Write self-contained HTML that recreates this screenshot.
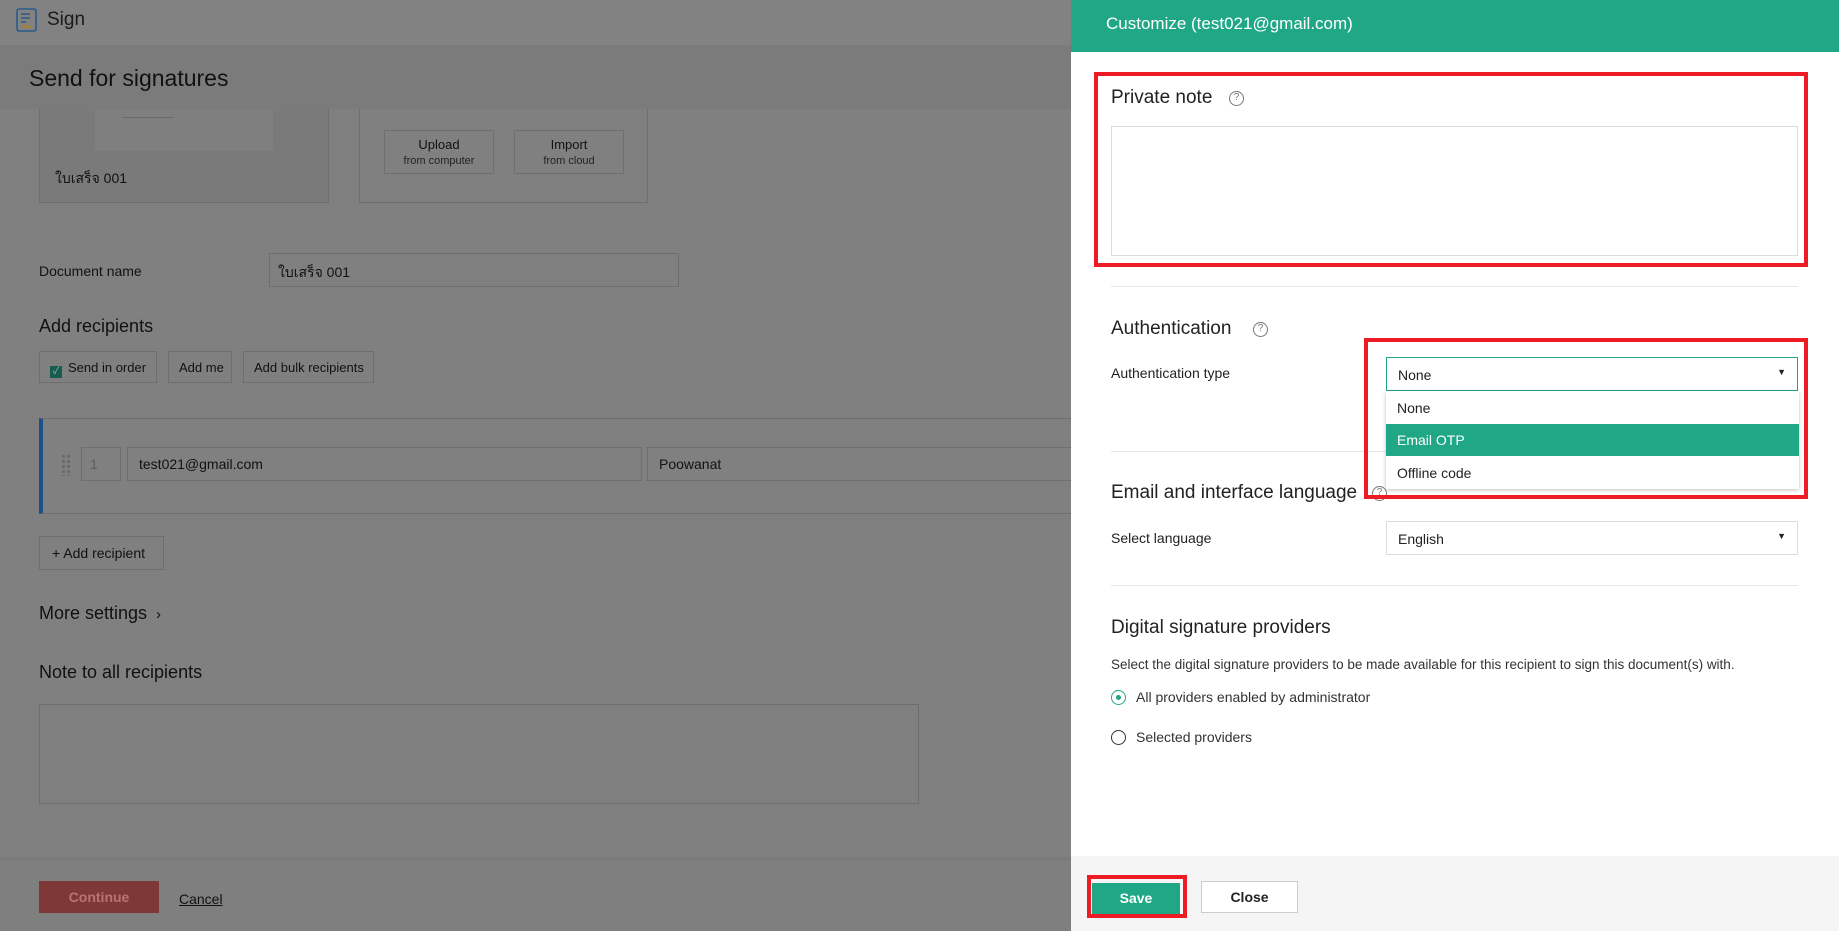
<!DOCTYPE html>
<html><head><meta charset="utf-8">
<style>
*{box-sizing:border-box;margin:0;padding:0}
body{width:1839px;height:931px;position:relative;overflow:hidden;background:#808080;font-family:"Liberation Sans","Noto Sans CJK SC",sans-serif;color:#111}
.a{position:absolute}
.bx{position:absolute;border:1px solid #6e6e6e}
.t{position:absolute;white-space:nowrap}
.pt{position:absolute;white-space:nowrap;color:#222}
.q{position:absolute;width:15px;height:15px;border:1.3px solid #777;border-radius:50%;font-size:10px;line-height:12px;text-align:center;color:#777}
.hr{position:absolute;left:1111px;width:687px;height:1px;background:#e6e6e6}
.red{position:absolute;border:4px solid #ed1c24}
</style></head><body>
<div class="a" style="left:0;top:0;width:1071px;height:45px;background:#828282"></div>
<svg class="a" style="left:16px;top:8px" width="22" height="24" viewBox="0 0 22 24"><rect x="1" y="1" width="19" height="22" rx="2" fill="none" stroke="#2a5a8a" stroke-width="1.6"/><path d="M5 6h9M5 10h9M5 14h5" stroke="#2a5a8a" stroke-width="1.6"/><path d="M6 19c3-3 4-1 5 0s3-1 5 0" stroke="#b08018" stroke-width="1.5" fill="none"/></svg>
<div class="t" style="left:47px;top:9px;font-size:19px;color:#1a1a1a">Sign</div>
<div class="a" style="left:0;top:45px;width:1071px;height:64px;background:#7b7b7b"></div>
<div class="t" style="left:29px;top:65px;font-size:23px;color:#111">Send for signatures</div>

<div class="bx" style="left:39px;top:109px;width:290px;height:94px;border-top:none;background:#7a7a7a"></div>
<div class="a" style="left:95px;top:109px;width:178px;height:42px;background:#7f7f7f"></div>
<div class="a" style="left:122px;top:117px;width:52px;height:1px;background:#6a6a6a"></div>
<div class="t" style="left:55px;top:168px;font-size:14px">ใบเสร็จ 001</div>
<div class="bx" style="left:359px;top:109px;width:289px;height:94px;border-top:none"></div>
<div class="bx" style="left:384px;top:130px;width:110px;height:44px;text-align:center;font-size:13px;padding-top:6px">Upload<div style="font-size:11px;color:#222;margin-top:3px">from computer</div></div>
<div class="bx" style="left:514px;top:130px;width:110px;height:44px;text-align:center;font-size:13px;padding-top:6px">Import<div style="font-size:11px;color:#222;margin-top:3px">from cloud</div></div>

<div class="t" style="left:39px;top:263px;font-size:14px">Document name</div>
<div class="bx" style="left:269px;top:253px;width:410px;height:34px;font-size:14px;padding:8px 0 0 8px">ใบเสร็จ 001</div>

<div class="t" style="left:39px;top:316px;font-size:18px">Add recipients</div>
<div class="bx" style="left:39px;top:351px;width:118px;height:32px;font-size:13px;padding:8px 0 0 10px"><span style="display:inline-block;width:12px;height:12px;background:#155e4d;vertical-align:-2px;margin-right:6px;color:#aaa;font-size:10px;line-height:12px;text-align:center">✓</span>Send in order</div>
<div class="bx" style="left:168px;top:351px;width:64px;height:32px;font-size:13px;padding:8px 0 0 10px">Add me</div>
<div class="bx" style="left:243px;top:351px;width:131px;height:32px;font-size:13px;padding:8px 0 0 10px">Add bulk recipients</div>

<div class="bx" style="left:39px;top:418px;width:1040px;height:96px;border-left:4px solid #1a4f8a;border-right:none"></div>
<div class="a" style="left:61px;top:454px;width:10px;height:22px;background:radial-gradient(circle,#6a6a6a 1.6px,transparent 1.8px) 0 0/5px 5px"></div>
<div class="bx" style="left:81px;top:447px;width:40px;height:34px;font-size:14px;color:#5e5e5e;padding:8px 0 0 8px">1</div>
<div class="bx" style="left:127px;top:447px;width:515px;height:34px;font-size:14px;padding:8px 0 0 11px">test021@gmail.com</div>
<div class="bx" style="left:647px;top:447px;width:430px;height:34px;font-size:14px;padding:8px 0 0 11px">Poowanat</div>

<div class="bx" style="left:39px;top:536px;width:125px;height:34px;font-size:14px;padding:8px 0 0 12px">+ Add recipient</div>
<div class="t" style="left:39px;top:603px;font-size:18px">More settings <span style="font-size:15px;margin-left:4px">›</span></div>
<div class="t" style="left:39px;top:662px;font-size:18px">Note to all recipients</div>
<div class="bx" style="left:39px;top:704px;width:880px;height:100px"></div>

<div class="a" style="left:0;top:860px;width:1071px;height:71px;background:#7f7f7f;box-shadow:0 -2px 3px rgba(0,0,0,.08)"></div>
<div class="a" style="left:39px;top:881px;width:120px;height:32px;background:#7f3838;color:#b57575;font-size:14px;font-weight:bold;text-align:center;line-height:32px">Continue</div>
<div class="t" style="left:179px;top:891px;font-size:14px;text-decoration:underline">Cancel</div>

<div class="a" style="left:1071px;top:0;width:768px;height:931px;background:#fff"></div>
<div class="a" style="left:1071px;top:0;width:768px;height:52px;background:#20a786"></div>
<div class="t" style="left:1106px;top:14px;font-size:17px;color:#fff">Customize (test021@gmail.com)</div>

<div class="pt" style="left:1111px;top:87px;font-size:19px">Private note</div>
<div class="q" style="left:1229px;top:91px">?</div>
<div class="a" style="left:1111px;top:126px;width:687px;height:130px;border:1px solid #dcdcdc"></div>
<div class="red" style="left:1094px;top:72px;width:714px;height:195px"></div>
<div class="hr" style="top:286px"></div>

<div class="pt" style="left:1111px;top:318px;font-size:19px">Authentication</div>
<div class="q" style="left:1253px;top:322px">?</div>
<div class="pt" style="left:1111px;top:365px;font-size:14px">Authentication type</div>
<div class="hr" style="top:451px"></div>

<div class="pt" style="left:1111px;top:482px;font-size:19px">Email and interface language</div>
<div class="q" style="left:1372px;top:486px">?</div>

<div class="a" style="left:1386px;top:357px;width:412px;height:34px;border:1px solid #20a786;font-size:14px;padding:9px 0 0 11px;color:#222;background:#fff">None<span style="position:absolute;right:11px;top:9px;font-size:9px">▼</span></div>
<div class="a" style="left:1386px;top:391px;width:413px;height:98px;background:#fff;box-shadow:0 1px 4px rgba(0,0,0,.25);font-size:14px;color:#222">
<div style="height:33px;padding:9px 0 0 11px">None</div>
<div style="height:32px;padding:8px 0 0 11px;background:#20a786;color:#fff">Email OTP</div>
<div style="height:33px;padding:9px 0 0 11px">Offline code</div></div>
<div class="red" style="left:1364px;top:338px;width:444px;height:161px"></div>

<div class="pt" style="left:1111px;top:530px;font-size:14px">Select language</div>
<div class="a" style="left:1386px;top:521px;width:412px;height:34px;border:1px solid #dcdcdc;font-size:14px;padding:9px 0 0 11px;color:#222">English<span style="position:absolute;right:11px;top:9px;font-size:9px">▼</span></div>
<div class="hr" style="top:585px"></div>

<div class="pt" style="left:1111px;top:617px;font-size:19px">Digital signature providers</div>
<div class="pt" style="left:1111px;top:657px;font-size:13.5px;color:#333">Select the digital signature providers to be made available for this recipient to sign this document(s) with.</div>
<div class="a" style="left:1111px;top:690px;width:15px;height:15px;border:1.5px solid #20a786;border-radius:50%"><div style="position:absolute;left:3.5px;top:3.5px;width:5px;height:5px;border-radius:50%;background:#20a786"></div></div>
<div class="pt" style="left:1136px;top:689px;font-size:14px;color:#333">All providers enabled by administrator</div>
<div class="a" style="left:1111px;top:730px;width:15px;height:15px;border:1.5px solid #333;border-radius:50%"></div>
<div class="pt" style="left:1136px;top:729px;font-size:14px;color:#333">Selected providers</div>

<div class="a" style="left:1071px;top:856px;width:768px;height:75px;background:#f5f5f5"></div>
<div class="a" style="left:1092px;top:883px;width:88px;height:31px;background:#20a786;color:#fff;font-weight:bold;font-size:14px;text-align:center;line-height:31px">Save</div>
<div class="red" style="left:1087px;top:875px;width:100px;height:43px"></div>
<div class="a" style="left:1201px;top:881px;width:97px;height:32px;background:#fff;border:1px solid #ccc;font-size:14px;text-align:center;line-height:30px;font-weight:bold;color:#222">Close</div>
</body></html>
